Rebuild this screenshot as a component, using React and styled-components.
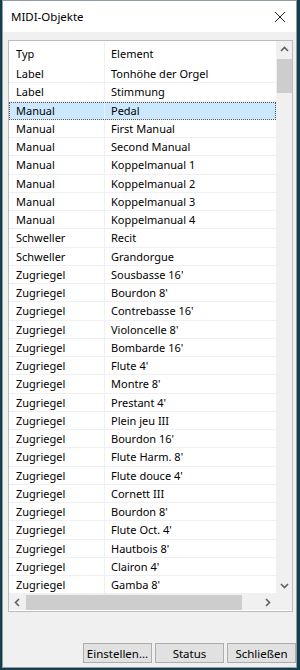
import styled, { createGlobalStyle } from 'styled-components'

const GlobalStyle = createGlobalStyle`
  body {
    margin: 0;
    background: #143f4d;
    font-family: "Noto Sans", "Open Sans", sans-serif;
  }
`

const rows = [
  ["Label", "Tonhöhe der Orgel"],
  ["Label", "Stimmung"],
  ["Manual", "Pedal"],
  ["Manual", "First Manual"],
  ["Manual", "Second Manual"],
  ["Manual", "Koppelmanual 1"],
  ["Manual", "Koppelmanual 2"],
  ["Manual", "Koppelmanual 3"],
  ["Manual", "Koppelmanual 4"],
  ["Schweller", "Recit"],
  ["Schweller", "Grandorgue"],
  ["Zugriegel", "Sousbasse 16'"],
  ["Zugriegel", "Bourdon 8'"],
  ["Zugriegel", "Contrebasse 16'"],
  ["Zugriegel", "Violoncelle 8'"],
  ["Zugriegel", "Bombarde 16'"],
  ["Zugriegel", "Flute 4'"],
  ["Zugriegel", "Montre 8'"],
  ["Zugriegel", "Prestant 4'"],
  ["Zugriegel", "Plein jeu III"],
  ["Zugriegel", "Bourdon 16'"],
  ["Zugriegel", "Flute Harm. 8'"],
  ["Zugriegel", "Flute douce 4'"],
  ["Zugriegel", "Cornett III"],
  ["Zugriegel", "Bourdon 8'"],
  ["Zugriegel", "Flute Oct. 4'"],
  ["Zugriegel", "Hautbois 8'"],
  ["Zugriegel", "Clairon 4'"],
  ["Zugriegel", "Gamba 8'"],
  ["", ""],
]

function App() {
  return (
    <>
      <GlobalStyle />
      <Window>
        <TitleBar>
          <Title>MIDI-Objekte</Title>
          <CloseIcon width="12" height="12" viewBox="0 0 12 12">
            <path d="M1 1L11 11M11 1L1 11" stroke="#222" strokeWidth="1" />
          </CloseIcon>
        </TitleBar>
        <Client>
          <ListBox>
            <Content>
              <HeaderRow>
                <Cell first>Typ</Cell>
                <Cell>Element</Cell>
              </HeaderRow>
              {rows.map((r, i) => (
                <Row key={i} selected={i === 2}>
                  <Cell first>{r[0]}</Cell>
                  <Cell>{r[1]}</Cell>
                </Row>
              ))}
            </Content>
            <VScroll>
              <Arrow>
                <svg width="9" height="6" viewBox="0 0 9 6">
                  <path d="M1 5L4.5 1.5L8 5" fill="none" stroke="#606060" strokeWidth="1.6" />
                </svg>
              </Arrow>
              <VThumb />
              <Spacer />
              <Arrow>
                <svg width="9" height="6" viewBox="0 0 9 6">
                  <path d="M1 1L4.5 4.5L8 1" fill="none" stroke="#606060" strokeWidth="1.6" />
                </svg>
              </Arrow>
            </VScroll>
            <HScroll>
              <Arrow>
                <svg width="6" height="9" viewBox="0 0 6 9">
                  <path d="M5 1L1.5 4.5L5 8" fill="none" stroke="#606060" strokeWidth="1.6" />
                </svg>
              </Arrow>
              <HThumb />
              <Spacer />
              <Arrow>
                <svg width="6" height="9" viewBox="0 0 6 9">
                  <path d="M1 1L4.5 4.5L1 8" fill="none" stroke="#606060" strokeWidth="1.6" />
                </svg>
              </Arrow>
            </HScroll>
            <Corner />
          </ListBox>
        </Client>
        <ButtonBar>
          <Button>Einstellen...</Button>
          <Button>Status</Button>
          <Button>Schließen</Button>
        </ButtonBar>
        <Grip>...</Grip>
      </Window>
    </>
  )
}

const Window = styled.div`
  position: relative;
  margin-left: 2px;
  width: 293px;
  height: 666px;
  border: 1px solid #8e9ea4;
  background: #f0f0f0;
  display: flex;
  flex-direction: column;
  color: #000;
  font-size: 11px;
`

const TitleBar = styled.div`
  height: 31px;
  background: #fff;
  display: flex;
  align-items: center;
  justify-content: space-between;
  padding: 0 10px 0 8px;
`

const Title = styled.span`
  font-size: 11.5px;
`

const CloseIcon = styled.svg`
  display: block;
`

const Client = styled.div`
  padding: 8px 3px 0 5px;
`

const ListBox = styled.div`
  height: 570px;
  border: 1px solid #bcbcbc;
  background: #fff;
  display: grid;
  grid-template-columns: 267px 16px;
  grid-template-rows: 553px 16px;
  overflow: hidden;
`

const Content = styled.div`
  overflow: hidden;
`

const HeaderRow = styled.div`
  display: grid;
  grid-template-columns: 96px 1fr;
  height: 24px;
  align-items: center;
  padding-top: 1px;
  box-sizing: border-box;
`

const Row = styled.div`
  display: grid;
  grid-template-columns: 96px 1fr;
  height: 18.25px;
  align-items: center;
  box-sizing: border-box;
  border-bottom: 1px solid #f0f0f0;
  background: ${p => (p.selected ? '#cce8ff' : '#fff')};
  outline: ${p => (p.selected ? '1px dotted #555' : 'none')};
  outline-offset: -1px;
`

const Cell = styled.div`
  height: 100%;
  display: flex;
  align-items: center;
  padding-left: ${p => (p.first ? '7px' : '6px')};
  border-right: ${p => (p.first ? '1px solid #f0f0f0' : 'none')};
  white-space: nowrap;
  overflow: hidden;
`

const VScroll = styled.div`
  background: #f0f0f0;
  display: flex;
  flex-direction: column;
  align-items: center;
`

const HScroll = styled.div`
  background: #f0f0f0;
  display: flex;
  align-items: center;
`

const Arrow = styled.div`
  width: 16px;
  height: 16px;
  flex: none;
  display: flex;
  align-items: center;
  justify-content: center;
`

const VThumb = styled.div`
  width: 15px;
  height: 34px;
  margin-top: 2px;
  background: #cdcdcd;
`

const HThumb = styled.div`
  height: 15px;
  width: 216px;
  margin-left: 1px;
  background: #cdcdcd;
`

const Spacer = styled.div`
  flex: 1;
`

const Corner = styled.div`
  background: #f0f0f0;
`

const ButtonBar = styled.div`
  display: flex;
  justify-content: flex-end;
  gap: 3px;
  padding: 31px 0 0 0;
`

const Button = styled.button`
  width: 69px;
  height: 20px;
  padding: 0;
  background: #e1e1e1;
  border: 1px solid #adadad;
  font-family: "Noto Sans", "Open Sans", sans-serif;
  font-size: 11.5px;
  color: #000;
`

const Grip = styled.div`
  position: absolute;
  right: 1px;
  bottom: -2px;
  font-size: 8px;
  color: #b0b0b0;
  letter-spacing: -1px;
  line-height: 8px;
`

export default App
